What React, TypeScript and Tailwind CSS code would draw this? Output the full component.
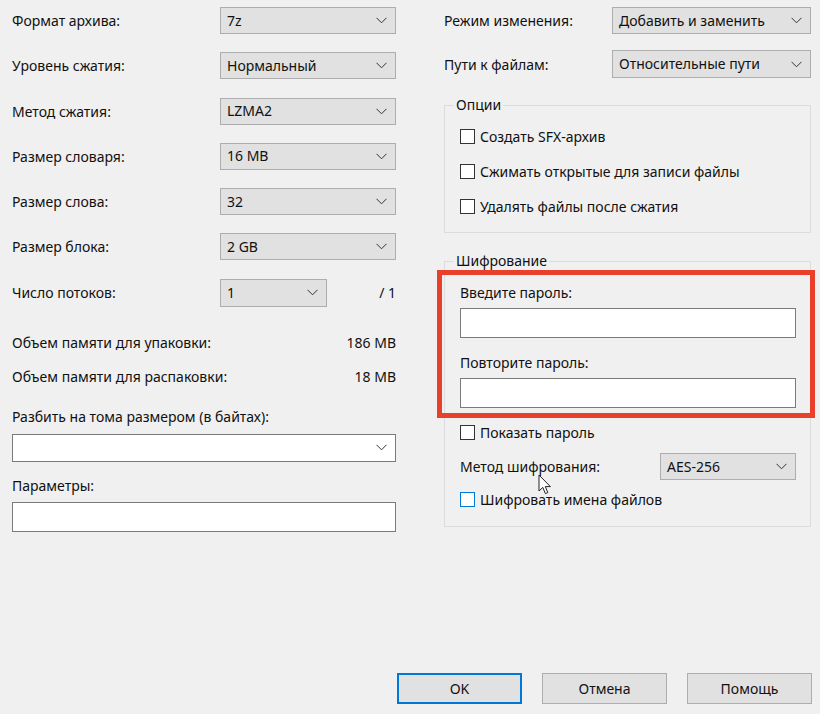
import React from "react";

const font = { fontFamily: '"Segoe UI", "Noto Sans", Arial, sans-serif' };

function Chevron() {
  return (
    <svg width="11" height="7" viewBox="0 0 11 7" className="shrink-0">
      <polyline points="0.5,0.8 5.5,5.8 10.5,0.8" fill="none" stroke="#333" strokeWidth="1" />
    </svg>
  );
}

function Combo({ value, white, className = "" }: { value: string; white?: boolean; className?: string }) {
  return (
    <div
      className={`flex items-center justify-between border pl-[6px] pr-[8px] ${
        white ? "border-[#7a7a7a] bg-white" : "border-[#adadad] bg-[#e1e1e1]"
      } ${className}`}
    >
      <span className="leading-none">{value}</span>
      <Chevron />
    </div>
  );
}

function Check({ label, hover }: { label: string; hover?: boolean }) {
  return (
    <div className="flex h-[20px] items-center">
      <span
        className={`mr-[5px] h-[15px] w-[15px] border bg-white ${hover ? "border-[#0078d7]" : "border-[#333]"}`}
      />
      <span>{label}</span>
    </div>
  );
}

function Group({ title, className = "", children }: { title: string; className?: string; children: React.ReactNode }) {
  return (
    <div className={`relative border border-[#dcdcdc] ${className}`}>
      <span className="absolute top-[-11px] left-[9px] bg-[#f0f0f0] px-[2px] leading-[20px]">{title}</span>
      {children}
    </div>
  );
}

const leftRows: [string, string][] = [
  ["Формат архива:", "7z"],
  ["Уровень сжатия:", "Нормальный"],
  ["Метод сжатия:", "LZMA2"],
  ["Размер словаря:", "16 MB"],
  ["Размер слова:", "32"],
  ["Размер блока:", "2 GB"],
];

function Button({ label, primary }: { label: string; primary?: boolean }) {
  return (
    <div
      className={`flex h-[31px] w-[125px] items-center justify-center bg-[#e1e1e1] ${
        primary ? "border-2 border-[#0078d7]" : "border border-[#adadad]"
      }`}
    >
      {label}
    </div>
  );
}

export default function App() {
  return (
    <div
      className="relative h-[714px] w-[820px] overflow-hidden bg-[#f0f0f0] text-[14px] text-[#111]"
      style={font}
    >
      <div className="flex pt-[7px]">
        {/* left column */}
        <div className="ml-[12px] flex w-[384px] flex-col">
          <div className="flex flex-col gap-[18.3px]">
            {leftRows.map(([label, value]) => (
              <div key={label} className="flex h-[27px] items-center">
                <span className="w-[208px]">{label}</span>
                <Combo value={value} className="h-[27px] flex-1" />
              </div>
            ))}
            <div className="flex h-[28px] items-center">
              <span className="w-[208px]">Число потоков:</span>
              <Combo value="1" className="h-[28px] w-[107px]" />
              <span className="flex-1 text-right">/ 1</span>
            </div>
          </div>
          <div className="mt-[26px] flex h-[20px] items-center justify-between">
            <span>Объем памяти для упаковки:</span>
            <span>186 MB</span>
          </div>
          <div className="mt-[14px] flex h-[20px] items-center justify-between">
            <span>Объем памяти для распаковки:</span>
            <span>18 MB</span>
          </div>
          <div className="mt-[20px] flex h-[20px] items-center">Разбить на тома размером (в байтах):</div>
          <Combo value="" white className="mt-[7px] h-[28px]" />
          <div className="mt-[14px] flex h-[20px] items-center">Параметры:</div>
          <div className="mt-[6px] h-[30px] border border-[#7a7a7a] bg-white" />
        </div>

        {/* right column */}
        <div className="ml-[48px] flex w-[367px] flex-col">
          <div className="flex h-[27px] items-center">
            <span className="w-[168px]">Режим изменения:</span>
            <Combo value="Добавить и заменить" className="h-[27px] flex-1" />
          </div>
          <div className="mt-[16px] flex h-[28px] items-center">
            <span className="w-[168px]">Пути к файлам:</span>
            <Combo value="Относительные пути" className="h-[28px] flex-1" />
          </div>

          <Group title="Опции" className="mt-[27px] h-[128px]">
            <div className="flex flex-col gap-[15px] pt-[20px] pl-[15px]">
              <Check label="Создать SFX-архив" />
              <Check label="Сжимать открытые для записи файлы" />
              <Check label="Удалять файлы после сжатия" />
            </div>
          </Group>

          <Group title="Шифрование" className="mt-[28px] h-[266px]">
            <div className="flex flex-col pt-[20px] pr-[14px] pl-[15px]">
              <div className="flex h-[20px] items-center">Введите пароль:</div>
              <div className="mt-[6px] h-[30px] border border-[#7a7a7a] bg-white" />
              <div className="mt-[14px] flex h-[20px] items-center">Повторите пароль:</div>
              <div className="mt-[6px] h-[30px] border border-[#7a7a7a] bg-white" />
              <div className="mt-[14px]">
                <Check label="Показать пароль" />
              </div>
              <div className="mt-[11px] flex h-[27px] items-center">
                <span className="w-[200px]">Метод шифрования:</span>
                <Combo value="AES-256" className="h-[27px] flex-1" />
              </div>
              <div className="mt-[9px]">
                <Check label="Шифровать имена файлов" hover />
              </div>
            </div>
          </Group>
        </div>
      </div>

      {/* buttons */}
      <div className="absolute top-[673px] left-[397px] flex gap-[20px]">
        <Button label="OK" primary />
        <Button label="Отмена" />
        <Button label="Помощь" />
      </div>

      {/* red annotation frame */}
      <div className="pointer-events-none absolute top-[270px] left-[437px] h-[148px] w-[378px] border-[5px] border-[#e8402a]" />

      {/* mouse cursor */}
      <svg className="pointer-events-none absolute top-[474px] left-[538px]" width="14" height="22" viewBox="0 0 14 22">
        <path
          d="M1 1 L1 17 L4.8 13.4 L7.4 19.6 L9.8 18.6 L7.3 12.6 L12.4 12.6 Z"
          fill="#fff"
          stroke="#222"
          strokeWidth="1"
          strokeLinejoin="round"
        />
      </svg>
    </div>
  );
}
